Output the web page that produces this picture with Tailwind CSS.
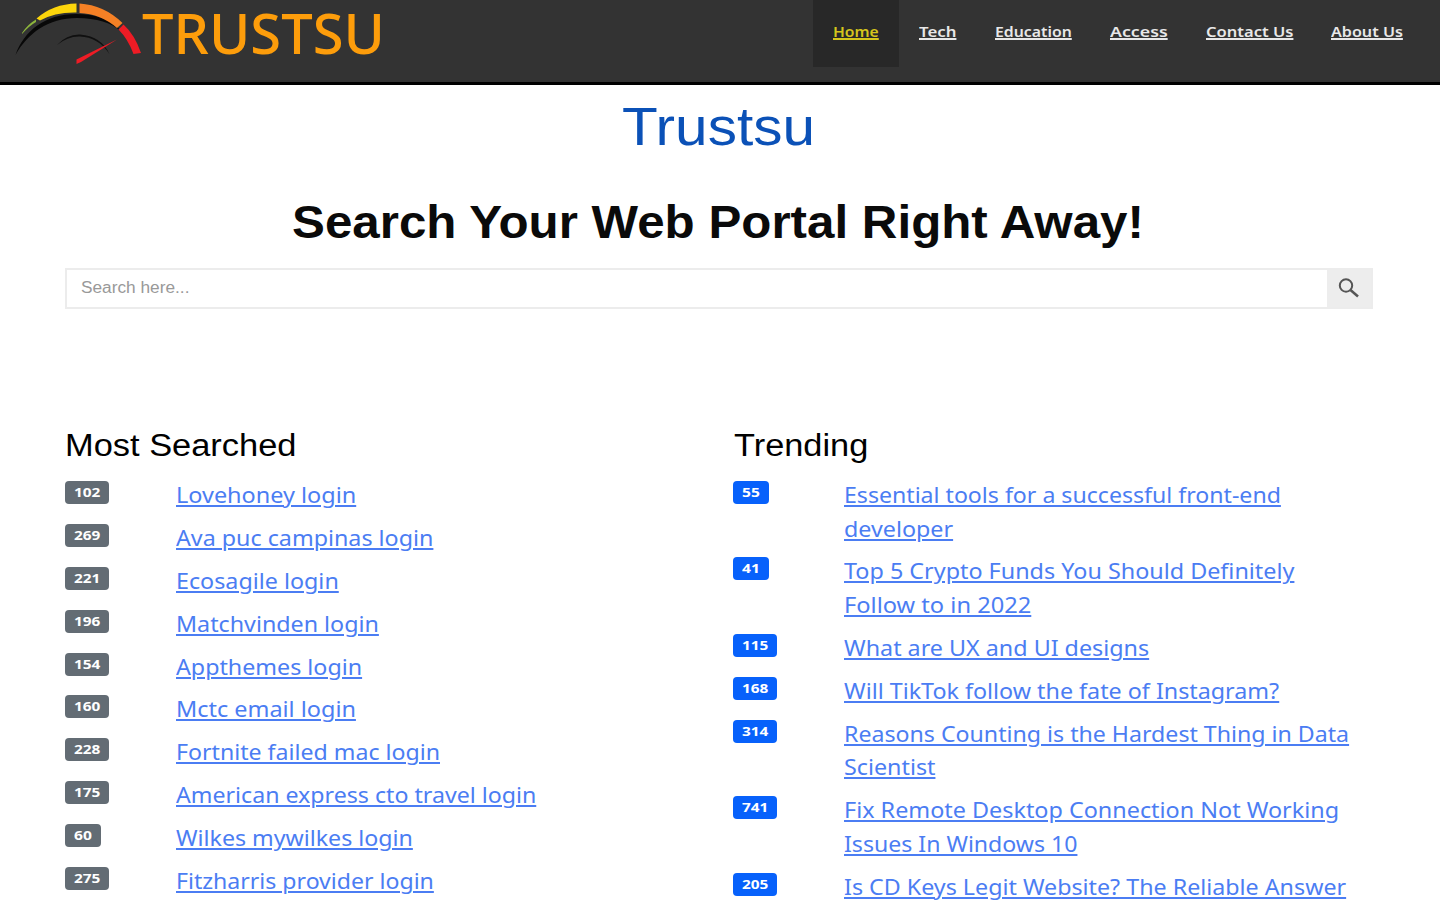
<!DOCTYPE html>
<html lang="en">
<head>
<meta charset="utf-8">
<title>Trustsu</title>
<script src="https://cdn.jsdelivr.net/npm/@tailwindcss/browser@4"></script>
</head>
<body class="h-[900px] overflow-hidden bg-white font-['Liberation_Sans',sans-serif] text-black">
<header class="flex h-[85px] justify-between border-b-[3px] border-black bg-[#333333]">
  <a class="flex pl-[14px]">
    <svg class="h-[70px] w-[128px] shrink-0" viewBox="14 0 128 70" fill="none">
      <path d="M15.500 55C24 31 45 14 76 14C97 14 112 20 121 31C111 23 97 18 77 18C48 18 28 33 15.500 55Z" fill="#080808"/>
      <path d="M22 33Q28 24 36 19.500V22Q29 26 22 34Z" fill="#8db63c"/>
      <path d="M36.500 18.500Q53 4 76.500 3.500V12.500Q55 12 40 20.500Z" fill="#fcd50b"/>
      <path d="M79.500 3.500Q104 5 122.500 23L117 28Q101 14 79.500 13Z" fill="#f58025"/>
      <path d="M123.500 24.500Q135 35 141 53L133.500 54Q128 39 118.500 29.500Z" fill="#ee1c25"/>
      <path d="M57 45Q67 34 80 34.500Q101 36 109.500 54Q98 37 80 36.500Q68 36 57 45Z" fill="#101010"/>
      <path d="M117 39.500L76.500 59.500V64L81 62Z" fill="#ee1c25"/>
    </svg>
    <span class="h-[70px] whitespace-nowrap font-['Noto_Sans',sans-serif] text-[57px] leading-[65px] font-medium text-[#fd9d0b]" data-w="243">TRUSTSU</span>
  </a>
  <nav class="flex h-[67px] pr-[18px] font-['Noto_Sans',sans-serif] text-[15px] leading-[63px] font-semibold text-[#e8e8e8]">
    <a class="bg-[#282828] px-5 text-[#d5c51c]"><span data-w="46">Home</span></a>
    <a class="px-5"><span data-w="37">Tech</span></a>
    <a class="px-[19px]"><span data-w="77">Education</span></a>
    <a class="px-[19px]"><span data-w="58">Access</span></a>
    <a class="px-[19px]"><span data-w="87">Contact Us</span></a>
    <a class="px-[19px]"><span data-w="72">About Us</span></a>
  </nav>
</header>
<main class="px-[65px]">
  <h1 class="flex h-[86px] justify-center pr-[4px] text-[54px] leading-[83px] text-[#0b51b7]"><span data-w="193">Trustsu</span></h1>
  <h2 class="flex h-[97px] justify-center pr-[4px] text-[46px] leading-[102px] font-bold text-[#0a0a0a]"><span data-w="852">Search Your Web Portal Right Away!</span></h2>
  <form class="flex h-[41px] w-[1308px] border-2 border-[#ececec]">
    <div class="flex-1 pl-[14px] text-[16px] leading-[36px] text-[#999999]"><span data-w="109">Search here...</span></div>
    <button type="button" class="flex w-[44px] items-center justify-center bg-[#ededed] pb-[2px]">
      <svg class="h-[20px] w-[22px]" viewBox="0 0 22 20" fill="none" stroke="#555555"><circle cx="8" cy="7.500" r="6.200" stroke-width="2"/><path d="M12.500 12L20 18.500" stroke-width="2.500"/></svg>
    </button>
  </form>
  <div class="mt-[116px] grid grid-cols-[668px_1fr]">
    <section>
      <h3 class="h-[53px] text-[31px] leading-[41px]"><span data-w="232">Most Searched</span></h3>
      <ul id="searched" class="flex flex-col gap-[9.3px] font-['Noto_Sans',sans-serif]"></ul>
    </section>
    <section>
      <h3 class="h-[53px] pl-px text-[31px] leading-[41px]"><span data-w="134">Trending</span></h3>
      <ul id="trending" class="flex flex-col gap-[9.3px] font-['Noto_Sans',sans-serif]"></ul>
    </section>
  </div>
</main>
<script>
const searched = [
  ['102', ['Lovehoney login', 180]], ['269', ['Ava puc campinas login', 257]], ['221', ['Ecosagile login', 163]],
  ['196', ['Matchvinden login', 203]], ['154', ['Appthemes login', 186]], ['160', ['Mctc email login', 180]],
  ['228', ['Fortnite failed mac login', 264]], ['175', ['American express cto travel login', 360]],
  ['60', ['Wilkes mywilkes login', 237]], ['275', ['Fitzharris provider login', 258]]
];
const trending = [
  ['55', ['Essential tools for a successful front-end', 437], ['developer', 109]],
  ['41', ['Top 5 Crypto Funds You Should Definitely', 450], ['Follow to in 2022', 187]],
  ['115', ['What are UX and UI designs', 305]],
  ['168', ['Will TikTok follow the fate of Instagram?', 435]],
  ['314', ['Reasons Counting is the Hardest Thing in Data', 505], ['Scientist', 91]],
  ['741', ['Fix Remote Desktop Connection Not Working', 495], ['Issues In Windows 10', 233]],
  ['205', ['Is CD Keys Legit Website? The Reliable Answer', 502]]
];
function rows(id, items, color) {
  document.getElementById(id).innerHTML = items.map(([n, ...lines]) =>
    `<li class="grid grid-cols-[111px_1fr] items-start"><span class="mt-[3px] flex h-[23px] ${n.length < 3 ? 'w-[36px]' : 'w-[44px]'} items-center justify-center rounded-[4px] text-[13px] leading-[23px] font-bold text-white ${color}"><span data-w="${n.length < 3 ? 18 : 26}">${n}</span></span><a class="flex flex-col text-[22px] leading-[33.6px] text-[#4b7df3]">${lines.map(([t, w]) => `<span data-w="${w}">${t}</span>`).join('')}</a></li>`).join('');
}
rows('searched', searched, 'bg-[#636c74]');
rows('trending', trending, 'bg-[#0761fb]');

// Each label keeps its own set width; its glyphs are scaled to fill it.
const labels = [...document.querySelectorAll('[data-w]')].map(el => {
  const inner = document.createElement('span');
  inner.textContent = el.textContent;
  inner.className = 'inline-block origin-left whitespace-nowrap';
  if (el.closest('nav')) inner.classList.add('underline', 'decoration-2', 'underline-offset-1');
  if (el.closest('ul a')) inner.classList.add('underline', 'decoration-[1.5px]', 'underline-offset-2');
  el.replaceChildren(inner);
  el.classList.add('inline-block', 'whitespace-nowrap');
  el.style.width = el.dataset.w + 'px';
  return [el, inner];
});
function fit() {
  labels.forEach(([el, inner]) => {
    if (inner.offsetWidth) inner.style.transform = `scaleX(${el.dataset.w / inner.offsetWidth})`;
  });
}
const watcher = new ResizeObserver(fit);
labels.forEach(([, inner]) => watcher.observe(inner));
addEventListener('load', fit);
</script>
</body>
</html>
